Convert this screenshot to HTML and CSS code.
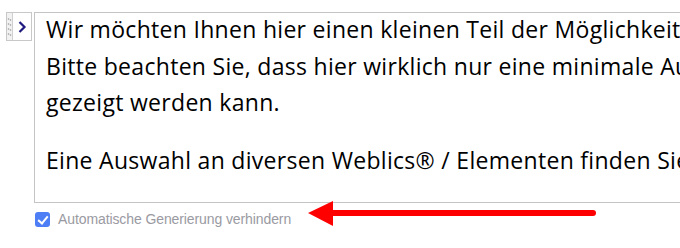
FILE: index.html
```html
<!DOCTYPE html>
<html lang="de">
<head>
    <meta charset="UTF-8">
    <title>Editor</title>
    <link rel="stylesheet" href="styles.css">
</head>
<body>
    <div class="page">
        <div class="editor-row">
            <div class="toggle-btn">
                <div class="grip">
                    <svg width="5" height="20" viewBox="0 0 5 20">
                        <circle cx="1.5" cy="2" r="0.8" fill="#999"/>
                        <circle cx="3.5" cy="3" r="0.8" fill="#999"/>
                        <circle cx="1.5" cy="7" r="0.8" fill="#999"/>
                        <circle cx="3.5" cy="8" r="0.8" fill="#999"/>
                        <circle cx="1.5" cy="12" r="0.8" fill="#999"/>
                        <circle cx="3.5" cy="13" r="0.8" fill="#999"/>
                        <circle cx="1.5" cy="17" r="0.8" fill="#999"/>
                        <circle cx="3.5" cy="18" r="0.8" fill="#999"/>
                    </svg>
                </div>
                <div class="chevron">
                    <svg width="10" height="14" viewBox="0 0 10 14">
                        <polyline points="2.5,2 7.5,7 2.5,12" fill="none" stroke="#1f1a80" stroke-width="2.2"/>
                    </svg>
                </div>
            </div>

            <div class="textbox">
                <p>Wir möchten Ihnen hier einen kleinen Teil der Möglichkeiten zeigen.<br>
                Bitte beachten Sie, dass hier wirklich nur eine minimale Auswahl<br>
                gezeigt werden kann.</p>
                <p>Eine Auswahl an diversen Weblics® / Elementen finden Sie hier.</p>
            </div>
        </div>

        <label class="option">
            <input type="checkbox" checked>
            <span>Automatische Generierung verhindern</span>
        </label>

        <!-- red hint arrow on top of the editor border -->
        <svg class="hint-arrow" width="300" height="30" viewBox="0 0 300 30">
            <line x1="22" y1="13" x2="285" y2="13" stroke="#ff0000" stroke-width="6" stroke-linecap="round"/>
            <polygon points="0,13 25,1 25,26" fill="#ff0000"/>
        </svg>
    </div>
</body>
</html>
```

FILE: styles.css
```css
* {
    margin: 0;
    padding: 0;
    box-sizing: border-box;
}

body {
    background: white;
    overflow: hidden;
    font-family: 'Open Sans', sans-serif;
}

.page {
    position: relative;
    padding-top: 12px;
    width: 760px;
}

.editor-row {
    display: flex;
    align-items: flex-start;
    gap: 2px;
    padding-left: 6px;
}

.toggle-btn {
    display: flex;
    width: 26px;
    height: 29px;
    border: 1px solid #c8c8c8;
    background: #f2f2f2;
}

.grip {
    width: 6px;
    border-right: 1px solid #d0d0d0;
    display: flex;
    align-items: center;
    justify-content: center;
}

.chevron {
    flex: 1;
    display: flex;
    align-items: center;
    justify-content: center;
    background: white;
}

.textbox {
    width: 720px;
    height: 191px;
    border: 1px solid #c4c4c4;
    padding: 0 0 0 11px;
    color: #000;
    font-size: 23px;
    letter-spacing: 0.3px;
    line-height: 36.5px;
    white-space: nowrap;
    overflow: hidden;
}

.textbox p {
    margin-bottom: 21px;
}

.textbox p:first-child {
    margin-top: -2px;
}

.option {
    display: flex;
    align-items: center;
    gap: 8px;
    margin: 8px 0 0 35px;
    font-family: 'Liberation Sans', Arial, sans-serif;
    font-size: 14px;
    letter-spacing: -0.1px;
    color: #9a9aa2;
}

.option input {
    appearance: none;
    width: 15px;
    height: 15px;
    border-radius: 3px;
    background: #4d7ef6;
    position: relative;
}

.option input::after {
    content: "";
    position: absolute;
    left: 5px;
    top: 2px;
    width: 4px;
    height: 8px;
    border: solid white;
    border-width: 0 2px 2px 0;
    transform: rotate(40deg);
}

.hint-arrow {
    position: absolute;
    left: 308px;
    top: 200px;
}
```
